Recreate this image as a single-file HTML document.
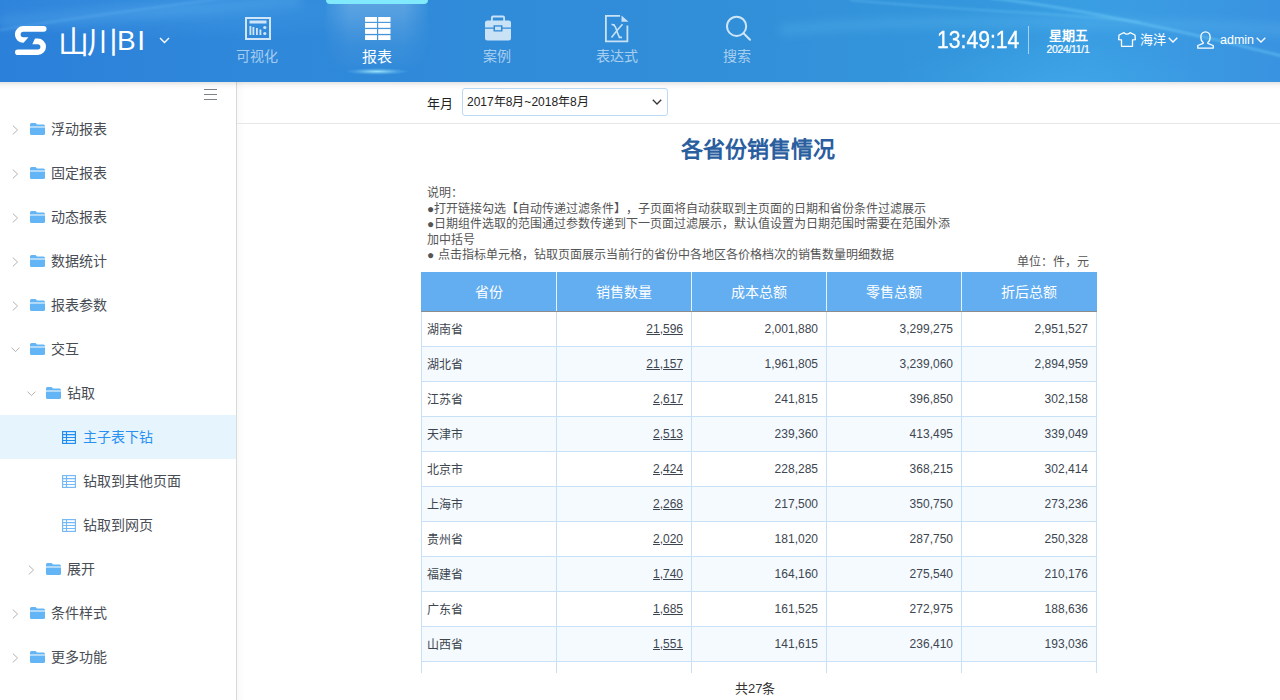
<!DOCTYPE html>
<html lang="zh-CN"><head><meta charset="utf-8">
<style>
*{margin:0;padding:0;box-sizing:border-box}
html,body{text-spacing-trim:space-all;width:1280px;height:700px;overflow:hidden;background:#fff;font-family:"Liberation Sans",sans-serif;}
#hdr{position:absolute;left:0;top:0;width:1280px;height:82px;background:radial-gradient(ellipse 160px 40px at 1050px 82px,rgba(70,180,240,.35),rgba(70,180,240,0)),radial-gradient(ellipse 260px 30px at 180px 10px,rgba(90,180,240,.25),rgba(90,180,240,0)),linear-gradient(90deg,#2b80d9 0%,#2f88da 20%,#318ed8 55%,#3496dc 75%,#3a9ee3 85%,#3a93e0 100%);overflow:hidden;z-index:2}
#side{position:absolute;left:0;top:82px;width:237px;height:618px;border-right:1px solid #d9d9d9;background:#fff}
#main{position:absolute;left:237px;top:82px;width:1043px;height:618px;background:#fff}
.abs{position:absolute}
.navt{position:absolute;top:47px;font-size:14px;line-height:18px;color:rgba(225,240,252,.68);width:80px;text-align:center}
.navt.on{color:#fff;font-size:15px;top:48px}
.tree{position:absolute;left:0;width:236px;height:44px;font-size:14px;color:#484d55}
.tree .tx{position:absolute;top:13px;line-height:18px;white-space:nowrap}
.tree.sel{background:#e6f4fe}
.tree.sel .tx{color:#2990f2}
.chev{position:absolute;top:18px;width:6px;height:6px;border-right:1px solid #a9a9a9;border-bottom:1px solid #a9a9a9;transform:rotate(-45deg)}
.chev.dn{transform:rotate(45deg);top:16px}
.fold{position:absolute;top:16px}
.tbl{position:absolute;top:16px}
table{border-collapse:collapse;table-layout:fixed;position:absolute;left:184px;top:190px;width:676px}
th{height:39px;background:#63aef1;color:#fff;font-weight:normal;font-size:14px;border-left:1px solid #e6f2fc;border-bottom:1px solid #8c8c8c}
th:first-child{border-left:1px solid #63aef1}
td{height:35px;border:1px solid #c9e1f6;font-size:12px;color:#3d4650;padding:0 8px 0 5px}
tr.alt td{background:#f5faff}
td.r{text-align:right}
td u{text-decoration:underline;text-underline-offset:1px}
.desc{position:absolute;left:190px;top:104px;font-size:12px;line-height:15.5px;color:#555;white-space:nowrap}
</style></head><body>
<div id="hdr">
<svg class="abs" style="left:0;top:0" width="1280" height="82" viewBox="0 0 1280 82"><defs><filter id="bl" x="-10%" y="-50%" width="120%" height="200%"><feGaussianBlur stdDeviation="1.2"/></filter><filter id="bl2" x="-10%" y="-50%" width="120%" height="200%"><feGaussianBlur stdDeviation="5"/></filter></defs>
<g fill="none" filter="url(#bl)"><path d="M990 -2C1080 8 1180 30 1290 58" stroke="rgba(120,210,250,.45)" stroke-width="2.5"/><path d="M850 0C950 10 1050 12 1140 22" stroke="rgba(120,210,250,.3)" stroke-width="2"/><path d="M0 30C60 20 150 8 240 -4" stroke="rgba(120,200,250,.25)" stroke-width="2"/></g>
<g fill="none" filter="url(#bl2)"><path d="M780 30C900 20 1050 18 1290 30" stroke="rgba(120,210,250,.18)" stroke-width="10"/><path d="M0 22C90 18 200 8 300 0" stroke="rgba(120,200,250,.18)" stroke-width="12"/></g></svg>
  <!-- active tab bar -->
  <div class="abs" style="left:326px;top:0;width:102px;height:4px;background:#80e9fb;border-radius:0 0 5px 5px"></div>
  <div class="abs" style="left:322px;top:4px;width:110px;height:70px;background:linear-gradient(180deg,rgba(255,255,255,.2),rgba(255,255,255,.05) 60%,rgba(255,255,255,0));clip-path:polygon(4% 0,96% 0,100% 100%,0 100%);-webkit-mask-image:linear-gradient(90deg,transparent,#000 25%,#000 75%,transparent)"></div>
  <div class="abs" style="left:345px;top:68px;width:64px;height:7px;border-radius:50%;background:radial-gradient(ellipse at center,rgba(170,240,255,.85),rgba(170,240,255,.2) 45%,rgba(170,240,255,0) 70%)"></div>
  <!-- logo -->
  <svg class="abs" style="left:15px;top:26px" width="32" height="29" viewBox="0 0 32 29"><path fill="#fff" d="M8.35,0H28.7A2.85,2.85 0 0 1 28.7,5.7H8.35A2.72,2.72 0 0 0 8.35,11.15H13.5L8.6,16.85H8.35A8.42,8.42 0 0 1 8.35,0Z"/><path fill="#fff" d="M20,12.6H22.8A8.2,8.2 0 0 1 22.8,29H2.8A2.8,2.8 0 0 1 2.8,23.4H22.8A2.6,2.6 0 0 0 22.8,18.2H17.3Z"/></svg>
  <div class="abs" style="left:58px;top:25px;font-size:31px;line-height:36px;color:#fff;font-weight:300;letter-spacing:-2px">山川</div><div class="abs" style="left:117px;top:23px;font-size:28px;line-height:36px;color:#fff;letter-spacing:1.5px">BI</div>
  <svg class="abs" style="left:159px;top:37px" width="11" height="7" viewBox="0 0 11 7"><path d="M1 1L5.5 5.5L10 1" fill="none" stroke="#fff" stroke-width="1.4"/></svg>
  <!-- nav icons -->
  <svg class="abs" style="left:245px;top:17px" width="26" height="23" viewBox="0 0 26 23"><g fill="#d0e6f8"><path d="M0 0H26V23H0ZM2 2V21H24V2Z"/><rect x="4.5" y="3.5" width="17" height="3"/><rect x="4.5" y="9" width="1.8" height="9"/><rect x="7.5" y="10" width="1.8" height="8"/><rect x="11" y="11" width="1.8" height="7"/><rect x="14.5" y="12.5" width="1.8" height="5.5"/><circle cx="19.8" cy="10.5" r="1.6"/><circle cx="19.8" cy="16.5" r="1.6"/></g></svg>
  <div class="navt" style="left:217px">可视化</div>
  <svg class="abs" style="left:365px;top:17px" width="26" height="23" viewBox="0 0 26 23"><g fill="#fff"><rect x="0" y="0" width="12" height="4.8"/><rect x="13.2" y="0" width="12.3" height="4.8"/><rect x="0" y="6" width="12" height="4.8"/><rect x="13.2" y="6" width="12.3" height="4.8"/><rect x="0" y="12.1" width="12" height="4.8"/><rect x="13.2" y="12.1" width="12.3" height="4.8"/><rect x="0" y="18.2" width="12" height="4.8"/><rect x="13.2" y="18.2" width="12.3" height="4.8"/></g></svg>
  <div class="navt on" style="left:337px">报表</div>
  <svg class="abs" style="left:485px;top:15px" width="26" height="26" viewBox="0 0 26 26"><g fill="#c9e2f6"><path d="M6 6V2.5A2 2 0 0 1 8 0.5H18A2 2 0 0 1 20 2.5V6H18.2V2.5H7.8V6Z"/><path d="M2.5 5.5H23.5A2.5 2.5 0 0 1 26 8V12.5H17.5V10.3H8.5V12.5H0V8A2.5 2.5 0 0 1 2.5 5.5Z"/><path d="M0 13.8H8.5V16.5H17.5V13.8H26V23A2.5 2.5 0 0 1 23.5 25.5H2.5A2.5 2.5 0 0 1 0 23Z"/><rect x="10" y="11.6" width="6" height="3.6"/></g></svg>
  <div class="navt" style="left:457px">案例</div>
  <svg class="abs" style="left:605px;top:15px" width="24" height="28" viewBox="0 0 24 28"><g fill="#c9e2f6"><path d="M0 0H15V1.8H1.8V25.5H21.5V10.5H23.3V27.3H0Z"/><path d="M16.5 0.5L23.5 6.8H16.5Z"/></g><path d="M6.5 9.5Q9.5 9 11 13.5Q12.5 18.5 14.5 22.5M17.5 9.2Q12.5 14.5 6.5 22.5M9.8 9.7H7M13.5 22.4H17" fill="none" stroke="#c9e2f6" stroke-width="1.6"/></svg>
  <div class="navt" style="left:577px">表达式</div>
  <svg class="abs" style="left:725px;top:15px" width="27" height="27" viewBox="0 0 27 27"><g fill="none" stroke="#d0e6f8" stroke-width="2"><circle cx="11.6" cy="11.3" r="9.6"/><path d="M18.5 18.3L25 24.8" stroke-linecap="round"/></g></svg>
  <div class="navt" style="left:697px">搜索</div>
  <!-- right side -->
  <div class="abs" style="left:937px;top:27px;font-size:23px;line-height:26px;color:#fff;-webkit-text-stroke:.3px #fff;transform:scaleX(.92);transform-origin:0 0">13:49:14</div>
  <div class="abs" style="left:1028px;top:26px;width:1px;height:28px;background:rgba(255,255,255,.55)"></div>
  <div class="abs" style="left:1040px;top:27px;width:56px;text-align:center;font-size:13px;line-height:18px;color:#fff;font-weight:bold">星期五</div>
  <div class="abs" style="left:1040px;top:43px;width:56px;text-align:center;font-size:10.5px;line-height:12px;color:#fff;letter-spacing:-0.35px;-webkit-text-stroke:.2px #fff">2024/11/1</div>
  <svg class="abs" style="left:1118px;top:32px" width="18" height="15" viewBox="0 0 18 15"><path d="M6 0.7L1 3L0.7 7.6L3.5 7.8V14.3H14.5V7.8L17.3 7.6L17 3L12 0.7Q9 3.5 6 0.7Z" fill="none" stroke="#fff" stroke-width="1.3" stroke-linejoin="round"/></svg>
  <div class="abs" style="left:1140px;top:31px;font-size:13px;line-height:18px;color:#fff">海洋</div>
  <svg class="abs" style="left:1168px;top:37px" width="10" height="6" viewBox="0 0 10 6"><path d="M0.7 0.7L5 5L9.3 0.7" fill="none" stroke="#fff" stroke-width="1.3"/></svg>
  <svg class="abs" style="left:1197px;top:31px" width="17" height="18" viewBox="0 0 17 18"><path d="M8.5 0.8A4.6 4.6 0 0 1 13.1 5.4V7Q13.1 10 10.8 11.5V12.3L16.2 14.5V17.2H0.8V14.5L6.2 12.3V11.5Q3.9 10 3.9 7V5.4A4.6 4.6 0 0 1 8.5 0.8Z" fill="none" stroke="#fff" stroke-width="1.3" stroke-linejoin="round"/></svg>
  <div class="abs" style="left:1220px;top:31px;font-size:12.5px;line-height:18px;color:#fff">admin</div>
  <svg class="abs" style="left:1256px;top:37px" width="10" height="6" viewBox="0 0 10 6"><path d="M0.7 0.7L5 5L9.3 0.7" fill="none" stroke="#fff" stroke-width="1.3"/></svg>
</div>
<div class="abs" style="left:0;top:82px;width:1280px;height:8px;background:linear-gradient(180deg,rgba(0,0,0,.11),rgba(0,0,0,.03) 45%,rgba(0,0,0,0));z-index:3"></div>
<div id="side">
  <div class="abs" style="left:204px;top:7px;width:13px;height:1px;background:#7d838b"></div>
  <div class="abs" style="left:204px;top:12px;width:13px;height:1px;background:#7d838b"></div>
  <div class="abs" style="left:204px;top:17px;width:13px;height:1px;background:#7d838b"></div>
<div class="tree" style="top:25px"><svg class="abs" style="left:12px;top:18px" width="7" height="10" viewBox="0 0 7 10"><path d="M0.8 0.6L5.6 5L0.8 9.4" fill="none" stroke="#b3b3b3" stroke-width="1"/></svg><svg class="fold" style="left:30px" width="15" height="12" viewBox="0 0 15 12"><path d="M1.5 0H5.5L7 1.6H13.5A1.5 1.5 0 0 1 15 3.1V3.6H0V1.5A1.5 1.5 0 0 1 1.5 0Z" fill="#64b5f6"/><path d="M0 4.6H15V10.5A1.5 1.5 0 0 1 13.5 12H1.5A1.5 1.5 0 0 1 0 10.5Z" fill="#64b5f6"/></svg><span class="tx" style="left:51px">浮动报表</span></div>
<div class="tree" style="top:69px"><svg class="abs" style="left:12px;top:18px" width="7" height="10" viewBox="0 0 7 10"><path d="M0.8 0.6L5.6 5L0.8 9.4" fill="none" stroke="#b3b3b3" stroke-width="1"/></svg><svg class="fold" style="left:30px" width="15" height="12" viewBox="0 0 15 12"><path d="M1.5 0H5.5L7 1.6H13.5A1.5 1.5 0 0 1 15 3.1V3.6H0V1.5A1.5 1.5 0 0 1 1.5 0Z" fill="#64b5f6"/><path d="M0 4.6H15V10.5A1.5 1.5 0 0 1 13.5 12H1.5A1.5 1.5 0 0 1 0 10.5Z" fill="#64b5f6"/></svg><span class="tx" style="left:51px">固定报表</span></div>
<div class="tree" style="top:113px"><svg class="abs" style="left:12px;top:18px" width="7" height="10" viewBox="0 0 7 10"><path d="M0.8 0.6L5.6 5L0.8 9.4" fill="none" stroke="#b3b3b3" stroke-width="1"/></svg><svg class="fold" style="left:30px" width="15" height="12" viewBox="0 0 15 12"><path d="M1.5 0H5.5L7 1.6H13.5A1.5 1.5 0 0 1 15 3.1V3.6H0V1.5A1.5 1.5 0 0 1 1.5 0Z" fill="#64b5f6"/><path d="M0 4.6H15V10.5A1.5 1.5 0 0 1 13.5 12H1.5A1.5 1.5 0 0 1 0 10.5Z" fill="#64b5f6"/></svg><span class="tx" style="left:51px">动态报表</span></div>
<div class="tree" style="top:157px"><svg class="abs" style="left:12px;top:18px" width="7" height="10" viewBox="0 0 7 10"><path d="M0.8 0.6L5.6 5L0.8 9.4" fill="none" stroke="#b3b3b3" stroke-width="1"/></svg><svg class="fold" style="left:30px" width="15" height="12" viewBox="0 0 15 12"><path d="M1.5 0H5.5L7 1.6H13.5A1.5 1.5 0 0 1 15 3.1V3.6H0V1.5A1.5 1.5 0 0 1 1.5 0Z" fill="#64b5f6"/><path d="M0 4.6H15V10.5A1.5 1.5 0 0 1 13.5 12H1.5A1.5 1.5 0 0 1 0 10.5Z" fill="#64b5f6"/></svg><span class="tx" style="left:51px">数据统计</span></div>
<div class="tree" style="top:201px"><svg class="abs" style="left:12px;top:18px" width="7" height="10" viewBox="0 0 7 10"><path d="M0.8 0.6L5.6 5L0.8 9.4" fill="none" stroke="#b3b3b3" stroke-width="1"/></svg><svg class="fold" style="left:30px" width="15" height="12" viewBox="0 0 15 12"><path d="M1.5 0H5.5L7 1.6H13.5A1.5 1.5 0 0 1 15 3.1V3.6H0V1.5A1.5 1.5 0 0 1 1.5 0Z" fill="#64b5f6"/><path d="M0 4.6H15V10.5A1.5 1.5 0 0 1 13.5 12H1.5A1.5 1.5 0 0 1 0 10.5Z" fill="#64b5f6"/></svg><span class="tx" style="left:51px">报表参数</span></div>
<div class="tree" style="top:245px"><svg class="abs" style="left:11px;top:20px" width="9" height="6" viewBox="0 0 9 6"><path d="M0.5 0.6L4.5 4.6L8.5 0.6" fill="none" stroke="#b3b3b3" stroke-width="1"/></svg><svg class="fold" style="left:30px" width="15" height="12" viewBox="0 0 15 12"><path d="M1.5 0H5.5L7 1.6H13.5A1.5 1.5 0 0 1 15 3.1V3.6H0V1.5A1.5 1.5 0 0 1 1.5 0Z" fill="#64b5f6"/><path d="M0 4.6H15V10.5A1.5 1.5 0 0 1 13.5 12H1.5A1.5 1.5 0 0 1 0 10.5Z" fill="#64b5f6"/></svg><span class="tx" style="left:51px">交互</span></div>
<div class="tree" style="top:289px"><svg class="abs" style="left:27px;top:20px" width="9" height="6" viewBox="0 0 9 6"><path d="M0.5 0.6L4.5 4.6L8.5 0.6" fill="none" stroke="#b3b3b3" stroke-width="1"/></svg><svg class="fold" style="left:46px" width="15" height="12" viewBox="0 0 15 12"><path d="M1.5 0H5.5L7 1.6H13.5A1.5 1.5 0 0 1 15 3.1V3.6H0V1.5A1.5 1.5 0 0 1 1.5 0Z" fill="#64b5f6"/><path d="M0 4.6H15V10.5A1.5 1.5 0 0 1 13.5 12H1.5A1.5 1.5 0 0 1 0 10.5Z" fill="#64b5f6"/></svg><span class="tx" style="left:67px">钻取</span></div>
<div class="tree sel" style="top:333px"><svg class="tbl" style="left:62px" width="14" height="13" viewBox="0 0 14 13"><g fill="none" stroke="#1f8cf0" stroke-width="1.15"><rect x="0.6" y="0.6" width="12.8" height="11.8"/><path d="M0.6 3.6H13.4M0.6 6.5H13.4M0.6 9.5H13.4M4.5 0.6V12.4"/></g></svg><span class="tx" style="left:83px">主子表下钻</span></div>
<div class="tree" style="top:377px"><svg class="tbl" style="left:62px" width="14" height="13" viewBox="0 0 14 13"><g fill="none" stroke="#74b9f5" stroke-width="1.15"><rect x="0.6" y="0.6" width="12.8" height="11.8"/><path d="M0.6 3.6H13.4M0.6 6.5H13.4M0.6 9.5H13.4M4.5 0.6V12.4"/></g></svg><span class="tx" style="left:83px">钻取到其他页面</span></div>
<div class="tree" style="top:421px"><svg class="tbl" style="left:62px" width="14" height="13" viewBox="0 0 14 13"><g fill="none" stroke="#74b9f5" stroke-width="1.15"><rect x="0.6" y="0.6" width="12.8" height="11.8"/><path d="M0.6 3.6H13.4M0.6 6.5H13.4M0.6 9.5H13.4M4.5 0.6V12.4"/></g></svg><span class="tx" style="left:83px">钻取到网页</span></div>
<div class="tree" style="top:465px"><svg class="abs" style="left:28px;top:18px" width="7" height="10" viewBox="0 0 7 10"><path d="M0.8 0.6L5.6 5L0.8 9.4" fill="none" stroke="#b3b3b3" stroke-width="1"/></svg><svg class="fold" style="left:46px" width="15" height="12" viewBox="0 0 15 12"><path d="M1.5 0H5.5L7 1.6H13.5A1.5 1.5 0 0 1 15 3.1V3.6H0V1.5A1.5 1.5 0 0 1 1.5 0Z" fill="#64b5f6"/><path d="M0 4.6H15V10.5A1.5 1.5 0 0 1 13.5 12H1.5A1.5 1.5 0 0 1 0 10.5Z" fill="#64b5f6"/></svg><span class="tx" style="left:67px">展开</span></div>
<div class="tree" style="top:509px"><svg class="abs" style="left:12px;top:18px" width="7" height="10" viewBox="0 0 7 10"><path d="M0.8 0.6L5.6 5L0.8 9.4" fill="none" stroke="#b3b3b3" stroke-width="1"/></svg><svg class="fold" style="left:30px" width="15" height="12" viewBox="0 0 15 12"><path d="M1.5 0H5.5L7 1.6H13.5A1.5 1.5 0 0 1 15 3.1V3.6H0V1.5A1.5 1.5 0 0 1 1.5 0Z" fill="#64b5f6"/><path d="M0 4.6H15V10.5A1.5 1.5 0 0 1 13.5 12H1.5A1.5 1.5 0 0 1 0 10.5Z" fill="#64b5f6"/></svg><span class="tx" style="left:51px">条件样式</span></div>
<div class="tree" style="top:553px"><svg class="abs" style="left:12px;top:18px" width="7" height="10" viewBox="0 0 7 10"><path d="M0.8 0.6L5.6 5L0.8 9.4" fill="none" stroke="#b3b3b3" stroke-width="1"/></svg><svg class="fold" style="left:30px" width="15" height="12" viewBox="0 0 15 12"><path d="M1.5 0H5.5L7 1.6H13.5A1.5 1.5 0 0 1 15 3.1V3.6H0V1.5A1.5 1.5 0 0 1 1.5 0Z" fill="#64b5f6"/><path d="M0 4.6H15V10.5A1.5 1.5 0 0 1 13.5 12H1.5A1.5 1.5 0 0 1 0 10.5Z" fill="#64b5f6"/></svg><span class="tx" style="left:51px">更多功能</span></div>
</div>
<div id="main">
  <div class="abs" style="left:0;top:0;width:8px;height:618px;background:linear-gradient(90deg,rgba(0,0,0,.025),rgba(0,0,0,0))"></div><div class="abs" style="left:0;top:41px;width:1043px;height:1px;background:#e6e6e6"></div>
  <div class="abs" style="left:190px;top:14px;font-size:13px;line-height:16px;color:#222">年月</div>
  <div class="abs" style="left:225px;top:6px;width:206px;height:28px;border:1px solid #b9d9f5;border-radius:3px;background:#fff"></div>
  <div class="abs" style="left:230px;top:12px;font-size:12px;line-height:16px;color:#222">2017年8月~2018年8月</div>
  <svg class="abs" style="left:415px;top:17px" width="10" height="6" viewBox="0 0 10 6"><path d="M0.8 0.8L5 5L9.2 0.8" fill="none" stroke="#333" stroke-width="1.3"/></svg>
  <div class="abs" style="left:444px;top:54px;width:155px;font-size:22px;line-height:28px;color:#2a5e9f;font-weight:bold;white-space:nowrap">各省份销售情况</div>
  <div class="desc">说明：<br>●打开链接勾选【自动传递过滤条件】，子页面将自动获取到主页面的日期和省份条件过滤展示<br>●日期组件选取的范围通过参数传递到下一页面过滤展示，默认值设置为日期范围时需要在范围外添<br>加中括号<br>● 点击指标单元格，钻取页面展示当前行的省份中各地区各价格档次的销售数量明细数据</div>
  <div class="abs" style="left:780px;top:172px;font-size:12px;line-height:16px;color:#555">单位：件，元</div>
  <div class="abs" style="left:0;top:0;width:1043px;height:591px;overflow:hidden">
  <table>
  <tr><th>省份</th><th>销售数量</th><th>成本总额</th><th>零售总额</th><th>折后总额</th></tr>
<tr><td class="l">湖南省</td><td class="r"><u>21,596</u></td><td class="r">2,001,880</td><td class="r">3,299,275</td><td class="r">2,951,527</td></tr>
<tr class="alt"><td class="l">湖北省</td><td class="r"><u>21,157</u></td><td class="r">1,961,805</td><td class="r">3,239,060</td><td class="r">2,894,959</td></tr>
<tr><td class="l">江苏省</td><td class="r"><u>2,617</u></td><td class="r">241,815</td><td class="r">396,850</td><td class="r">302,158</td></tr>
<tr class="alt"><td class="l">天津市</td><td class="r"><u>2,513</u></td><td class="r">239,360</td><td class="r">413,495</td><td class="r">339,049</td></tr>
<tr><td class="l">北京市</td><td class="r"><u>2,424</u></td><td class="r">228,285</td><td class="r">368,215</td><td class="r">302,414</td></tr>
<tr class="alt"><td class="l">上海市</td><td class="r"><u>2,268</u></td><td class="r">217,500</td><td class="r">350,750</td><td class="r">273,236</td></tr>
<tr><td class="l">贵州省</td><td class="r"><u>2,020</u></td><td class="r">181,020</td><td class="r">287,750</td><td class="r">250,328</td></tr>
<tr class="alt"><td class="l">福建省</td><td class="r"><u>1,740</u></td><td class="r">164,160</td><td class="r">275,540</td><td class="r">210,176</td></tr>
<tr><td class="l">广东省</td><td class="r"><u>1,685</u></td><td class="r">161,525</td><td class="r">272,975</td><td class="r">188,636</td></tr>
<tr class="alt"><td class="l">山西省</td><td class="r"><u>1,551</u></td><td class="r">141,615</td><td class="r">236,410</td><td class="r">193,036</td></tr>
<tr><td class="l"></td><td class="r"><u></u></td><td class="r"></td><td class="r"></td><td class="r"></td></tr>
  </table>
  </div>
  <div class="abs" style="left:498px;top:599px;font-size:13px;line-height:16px;color:#333">共27条</div>
</div>
</body></html>
